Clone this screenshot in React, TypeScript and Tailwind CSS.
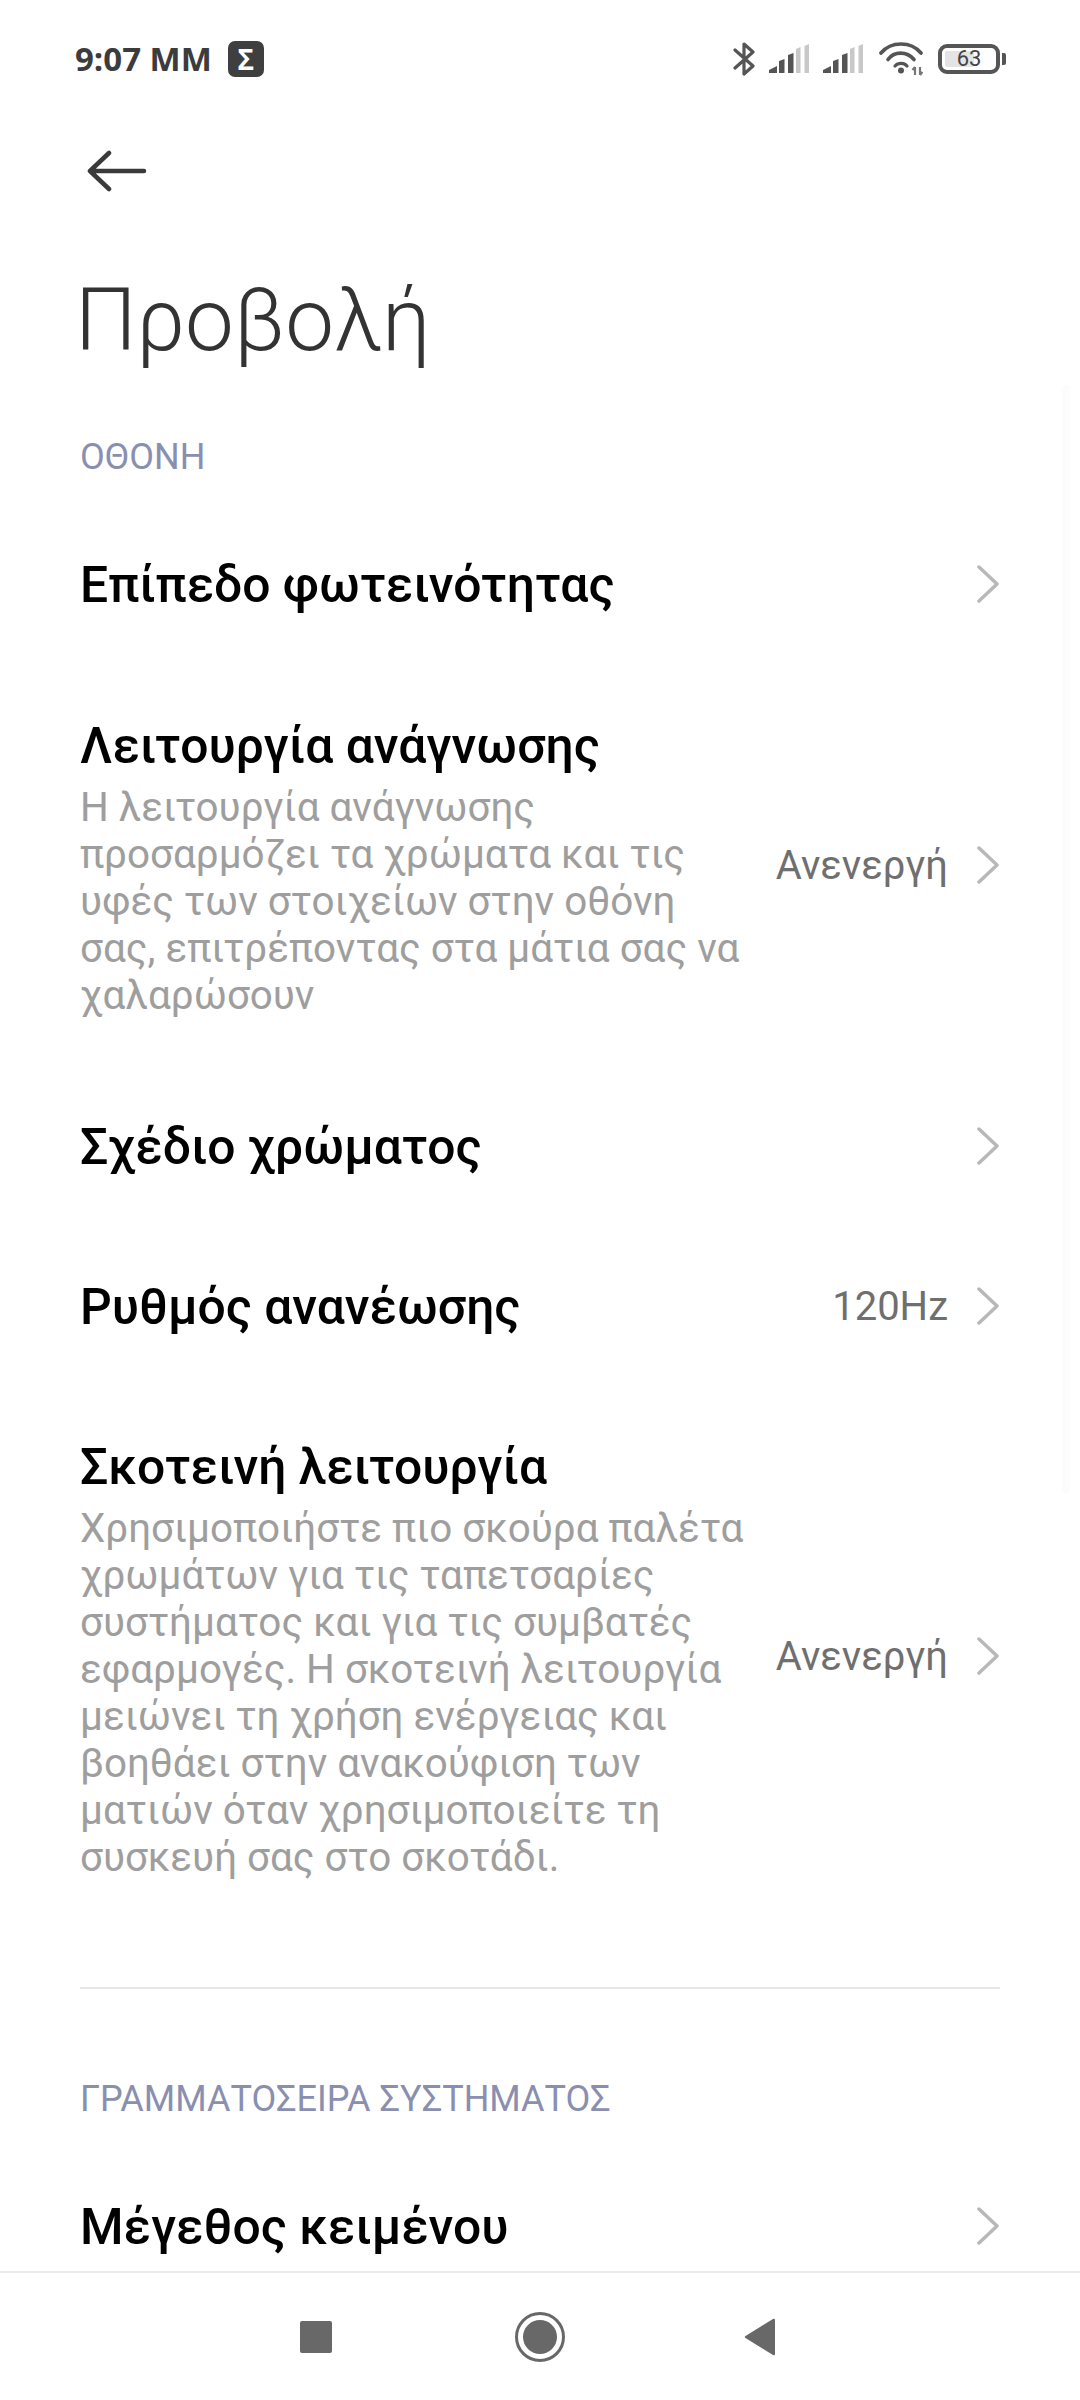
const rowTitle = "text-[49.8px] leading-[56px] font-medium text-black";
const rowSub = "text-[40.4px] leading-[47px] text-[#9e9e9e]";

function Chevron() {
  return (
    <svg width="24" height="40" viewBox="0 0 24 40" fill="none" className="shrink-0">
      <path d="M3 2 L21 19 L3 36" stroke="#b8b8b8" strokeWidth="3.5" strokeLinecap="round" strokeLinejoin="round" />
    </svg>
  );
}

function Signal() {
  return (
    <svg width="40" height="29" viewBox="0 0 40 29">
      <path d="M0 29 V26 L8 22 V29 Z" fill="#555" />
      <path d="M10 29 V17 L15.5 15 V29 Z" fill="#555" />
      <path d="M19 29 V11 L24.5 9 V29 Z" fill="#555" />
      <path d="M27 29 V5 L31.5 3 V29 Z" fill="#c8c8c8" />
      <path d="M35.5 29 V2 L40 0 V29 Z" fill="#c8c8c8" />
    </svg>
  );
}

function StatusBar() {
  return (
    <div className="flex h-[116px] items-center justify-between pl-[75px] pr-[74px] pt-[1px]">
      <div className="flex items-center gap-[16px]">
        <span className="font-['Open_Sans'] text-[33px] leading-none font-bold text-[#3c3c3c]">9:07 ΜΜ</span>
        <span className="flex h-[36px] w-[36px] items-center justify-center rounded-[7px] bg-[#3f3f3f] font-['Open_Sans'] text-[28px] leading-none font-bold text-white">
          Σ
        </span>
      </div>
      <div className="flex items-center">
        <svg width="22" height="36" viewBox="0 0 22 36" fill="none" className="mr-[14px]">
          <path d="M2 9 L20 25 L11 33 V3 L20 11 L2 27" stroke="#555" strokeWidth="3.2" strokeLinejoin="round" strokeLinecap="round" />
        </svg>
        <Signal />
        <div className="w-[14px]" />
        <Signal />
        <svg width="44" height="34" viewBox="0 0 44 34" fill="none" className="ml-[16px]">
          <path d="M2 11 C12 -1 32 -1 42 11" stroke="#555" strokeWidth="3.6" strokeLinecap="round" />
          <path d="M9 17.5 C15 9 28 9 35 17.5" stroke="#555" strokeWidth="3.6" strokeLinecap="round" />
          <path d="M16 24 C19 20.5 25 20.5 28 24" stroke="#555" strokeWidth="3.2" strokeLinecap="round" />
          <circle cx="22" cy="28.5" r="3" fill="#555" />
          <path d="M36 25 V33 M33.5 28 L36 25 M41 25 V33 M41 33 L43.5 30" stroke="#777" strokeWidth="2.2" />
        </svg>
        <div className="ml-[15px] flex items-center">
          <div className="relative flex h-[30px] w-[62px] items-center justify-center rounded-[9px] border-[4px] border-[#555] text-[#444]">
            <div className="absolute top-[3px] bottom-[3px] left-[3px] w-[29px] rounded-[2px] bg-[#e4e4e4]" />
            <span className="relative font-['Roboto'] text-[22px] leading-none">63</span>
          </div>
          <div className="ml-[2px] h-[12px] w-[4px] rounded-r-[2px] bg-[#555]" />
        </div>
      </div>
    </div>
  );
}

function Row({
  title,
  sub,
  value,
  className = "",
}: {
  title: string;
  sub?: string[];
  value?: string;
  className?: string;
}) {
  return (
    <div className={`flex items-center justify-between ${className}`}>
      <div>
        <div className={rowTitle}>{title}</div>
        {sub && (
          <div className={`${rowSub} mt-[10px]`}>
            {sub.map((line) => (
              <div key={line}>{line}</div>
            ))}
          </div>
        )}
      </div>
      <div className={`flex items-center gap-[28px] ${sub ? "pb-[6px]" : ""}`}>
        {value && <span className="text-[40px] leading-none text-[#6f6f6f]">{value}</span>}
        <Chevron />
      </div>
    </div>
  );
}

export default function App() {
  return (
    <div className="relative flex h-[2400px] w-[1080px] flex-col overflow-hidden bg-white font-['Roboto',sans-serif]">
      <StatusBar />
      <div className="h-[110px] pl-[87px] pt-[34px]">
        <svg width="60" height="42" viewBox="0 0 60 42" fill="none">
          <path d="M3 21 H57 M22 3 L3 21 L22 39" stroke="#3a3a3a" strokeWidth="4.5" strokeLinecap="round" strokeLinejoin="round" />
        </svg>
      </div>
      <h1 className="pl-[75px] pt-[44px] text-[87px] leading-[100px] font-light text-[#333]">Προβολή</h1>

      <div className="flex-1 overflow-hidden px-[80px]">
        <div className="mt-[67px] text-[36px] leading-[40px] text-[#8a8fb0]">ΟΘΟΝΗ</div>
        <Row title="Επίπεδο φωτεινότητας" className="mt-[80px]" />
        <Row
          title="Λειτουργία ανάγνωσης"
          className="mt-[105px]"
          value="Ανενεργή"
          sub={[
            "Η λειτουργία ανάγνωσης",
            "προσαρμόζει τα χρώματα και τις",
            "υφές των στοιχείων στην οθόνη",
            "σας, επιτρέποντας στα μάτια σας να",
            "χαλαρώσουν",
          ]}
        />
        <Row title="Σχέδιο χρώματος" className="mt-[100px]" />
        <Row title="Ρυθμός ανανέωσης" className="mt-[104px]" value="120Hz" />
        <Row
          title="Σκοτεινή λειτουργία"
          className="mt-[104px]"
          value="Ανενεργή"
          sub={[
            "Χρησιμοποιήστε πιο σκούρα παλέτα",
            "χρωμάτων για τις ταπετσαρίες",
            "συστήματος και για τις συμβατές",
            "εφαρμογές. Η σκοτεινή λειτουργία",
            "μειώνει τη χρήση ενέργειας και",
            "βοηθάει στην ανακούφιση των",
            "ματιών όταν χρησιμοποιείτε τη",
            "συσκευή σας στο σκοτάδι.",
          ]}
        />
        <div className="mt-[106px] h-[2px] bg-[#e6e6e6]" />
        <div className="mt-[90px] text-[36px] leading-[40px] text-[#8a8fb0]">ΓΡΑΜΜΑΤΟΣΕΙΡΑ ΣΥΣΤΗΜΑΤΟΣ</div>
        <Row title="Μέγεθος κειμένου" className="mt-[80px]" />
      </div>

      <div className="flex h-[129px] items-center justify-center border-t-2 border-[#ececec] bg-white pr-[5px]">
        <div className="mr-[183px] h-[32px] w-[32px] rounded-[2px] bg-[#686868]" />
        <div className="flex h-[50px] w-[50px] items-center justify-center rounded-full border-[3px] border-[#686868]">
          <div className="h-[34px] w-[34px] rounded-full bg-[#686868]" />
        </div>
        <svg width="32" height="38" viewBox="0 0 32 38" className="ml-[179px]">
          <path d="M31 2 V36 Q31 38 29 37 L1.5 20 Q0 19 1.5 18 L29 1 Q31 0 31 2 Z" fill="#686868" />
        </svg>
      </div>

      {/* faint scrollbar over the list */}
      <div className="absolute top-[385px] left-[1062px] h-[1109px] w-[8px] rounded-full bg-[#fcfcfc]" />
    </div>
  );
}
